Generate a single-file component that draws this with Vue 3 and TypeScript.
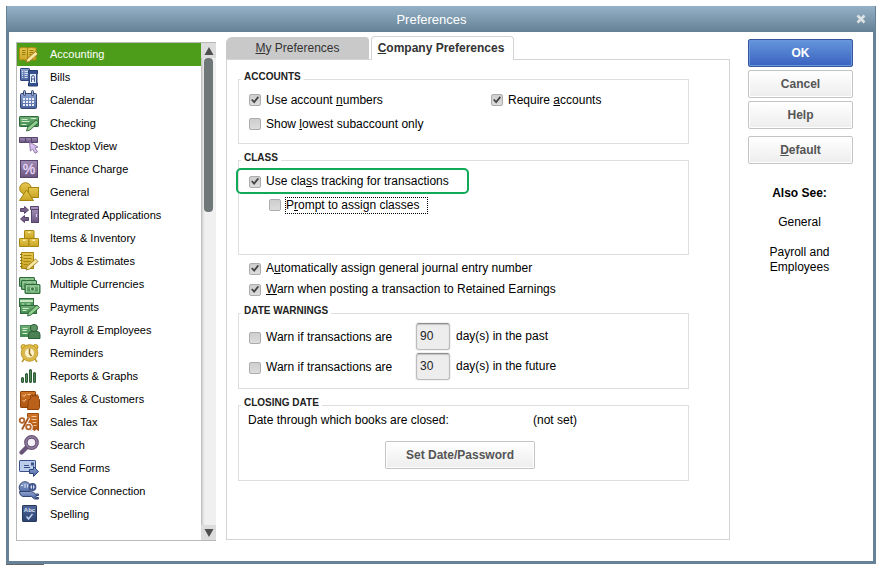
<script setup lang="ts">
import { ref } from 'vue'

interface Category {
  name: string
  art: string
}

const pencil = (x: number, y: number, fill: string, edge: string) =>
  `<path d="M${x} ${y}l1-3.500 8.500-7.500 2.500 2.500-8.500 7.500z" fill="${fill}" stroke="${edge}" stroke-width=".8"/>`

const bill = (x: number, y: number) =>
  `<rect x="${x}" y="${y}" width="15" height="9" rx=".6" fill="url(#g-green)" stroke="#2f6b3c"/><rect x="${x + 1.5}" y="${y + 1.5}" width="12" height="6" fill="none" stroke="#b9e0b4" stroke-width=".8"/><circle cx="${x + 7.5}" cy="${y + 4.5}" r="2.200" fill="#3f7d49" stroke="#c8e8c4" stroke-width=".8"/>`

const box = (x: number, y: number) =>
  `<rect x="${x}" y="${y}" width="9.500" height="8" rx=".5" fill="url(#g-gold)" stroke="#a5840f"/><path d="M${x + 3.5} ${y + 1}h2.500v1.500h-2.500z" fill="#fbeeb0"/>`

const categories: Category[] = [
  {
    name: 'Accounting',
    art: `<path d="M1.500 4q4.500-1 8 0 3.500-1 8.500 0v12q-5-1-8.500.8-3.500-1.800-8-.8z" fill="url(#g-gold)" stroke="#b08b12"/><path d="M9.500 4.500v11.500" stroke="#a5840f"/><path d="M4 6.500h3.500M4 8.500h3.500M4 10.500h3.500M11.500 6.500h4M11.500 8.500h4M11.500 10.500h2" stroke="#9a7a10"/>${pencil(8, 18.5, '#f8e6a0', '#8f7010')}`,
  },
  {
    name: 'Bills',
    art: `<rect x="2.500" y="1.500" width="9" height="12" rx=".6" fill="url(#g-blue)" stroke="#2c4480"/><path d="M4 4.500h1M6.500 4.500h4M4 6.500h1M6.500 6.500h4M4 8.500h1M6.500 8.500h3M4 10.500h1M6.500 10.500h3" stroke="#d5e0f5"/><path d="M10.500 3.500h9v3h-.5v9.500h.5v3h-9v-3h.5v-9.500h-.5z" fill="#35508f" stroke="#243a70"/><rect x="12" y="7" width="6" height="9" fill="#e4ecfa"/><path d="M13.500 15v-4.500q0-2 1.500-2t1.500 2v4.500M13.500 12h3" fill="none" stroke="#41588f"/>`,
  },
  {
    name: 'Calendar',
    art: `<rect x="2.500" y="3.500" width="16" height="15" rx="1" fill="url(#g-blue)" stroke="#34456f"/><rect x="5.500" y=".5" width="2" height="5" rx="1" fill="#a5b3d4" stroke="#34456f"/><rect x="13.500" y=".5" width="2" height="5" rx="1" fill="#a5b3d4" stroke="#34456f"/><path d="M5 9h11.500M5 12h11.500M5 15h11.500" stroke="#e9eefa" stroke-width="2" stroke-dasharray="2 1"/>`,
  },
  {
    name: 'Checking',
    art: `<rect x="1.500" y="3.500" width="19" height="10" rx=".6" fill="url(#g-green)" stroke="#2f6b3c"/><path d="M3.500 6.500h6M3.500 8.500h8M3.500 11.500h5M13 5.500h5" stroke="#cdeccb"/>${pencil(8.5, 18, '#8fce8c', '#25552f')}`,
  },
  {
    name: 'Desktop View',
    art: `<path d="M1.500 1.500h6v5h-6zM7.500 1.500h6v5h-6zM13.500 1.500h6v5h-6z" fill="url(#g-purple)" stroke="#57446a"/><path d="M11.500 6l8.500 5-3 .8 2.500 4.200-2.500 1.200-2.300-4.200-2.300 2z" fill="#d8c2ee" stroke="#7d6497" stroke-width=".8"/>`,
  },
  {
    name: 'Finance Charge',
    art: `<rect x="2.500" y="1.500" width="17" height="17" fill="url(#g-purple)" stroke="#57446a"/><text x="11" y="15" text-anchor="middle" font-size="14" fill="#ead9fa" stroke="#ead9fa" stroke-width=".3">%</text>`,
  },
  {
    name: 'General',
    art: `<circle cx="7.500" cy="6.500" r="5.800" fill="url(#g-gold)" stroke="#a5840f"/><rect x="10.500" y="5.500" width="10" height="10" fill="url(#g-gold)" stroke="#a5840f"/><path d="M8.500 8l7 10.500h-14z" fill="url(#g-gold)" stroke="#a5840f"/>`,
  },
  {
    name: 'Integrated Applications',
    art: `<path d="M2.500 3.500h4v-2l4 3.500-4 3.500v-2h-4zM10.500 12.500h-4v-2l-4 3.500 4 3.500v-2h4z" fill="#735f86" stroke="#57446a"/><path d="M12.500 1.500h8v3h-8z" fill="#a794bb" stroke="#57446a"/><rect x="13.500" y="4.500" width="7" height="13" fill="url(#g-purple)" stroke="#57446a"/><path d="M18.500 9v3" stroke="#e2cff5"/>`,
  },
  { name: 'Items & Inventory', art: box(6.5, 2.5) + box(1.5, 10.5) + box(11, 10.5) },
  {
    name: 'Jobs & Estimates',
    art: `<path d="M3.500 1.500h12v16h-12z" fill="url(#g-gold)" stroke="#a5840f"/><path d="M5.500 4.500h8M5.500 7.500h8M5.500 10.500h7M5.500 13.500h4" stroke="#a5840f"/><path d="M2 3.500h2.500M2 6.500h2.500M2 9.500h2.500M2 12.500h2.500M2 15.500h2.500" stroke="#8f7010"/>${pencil(8, 19, '#f8e6a0', '#8f7010')}`,
  },
  { name: 'Multiple Currencies', art: bill(1.5, 3.5) + bill(3.5, 6.5) + bill(7, 10.5) },
  {
    name: 'Payments',
    art: `<rect x="1.500" y="1.500" width="14" height="8" fill="url(#g-green)" stroke="#2f6b3c"/><path d="M2 4h13" stroke="#c5e8c2" stroke-width="2"/><path d="M3.500 7h3M8.500 7h4" stroke="#c5e8c2"/><rect x="2.500" y="8.500" width="16" height="8" fill="url(#g-green)" stroke="#2f6b3c"/><path d="M4.500 11.500h6M4.500 13.500h4" stroke="#d4f0d1"/>${pencil(9.5, 19, '#8fce8c', '#25552f')}`,
  },
  {
    name: 'Payroll & Employees',
    art: `<rect x="2.500" y="5.500" width="16" height="11" fill="url(#g-green)" stroke="#4a8c57"/><path d="M4.500 8.500h5M4.500 10.500h4M4.500 13.500h5" stroke="#d4f0d1"/><circle cx="16" cy="8" r="3.600" fill="#5e9263" stroke="#2d5f37"/><path d="M10.500 18.500v-4q0-3 3-3h5.500q3 0 3 3v4z" fill="#4c8253" stroke="#2d5f37"/>`,
  },
  {
    name: 'Reminders',
    art: `<circle cx="5.500" cy="4" r="2.500" fill="#e6c34a" stroke="#b8942a"/><circle cx="17.500" cy="4" r="2.500" fill="#e6c34a" stroke="#b8942a"/><path d="M6 16l-2 3M17 16l2 3" stroke="#b8942a" stroke-width="1.500"/><circle cx="11.500" cy="10" r="6.800" fill="#fff3cc" stroke="#dcb846" stroke-width="3.200"/><circle cx="11.500" cy="10" r="8.300" fill="none" stroke="#b8942a" stroke-width=".8"/><circle cx="11.500" cy="10" r="5" fill="none" stroke="#b8942a" stroke-width=".6"/><path d="M11.500 5.500v5l2 2.500" fill="none" stroke="#94731a" stroke-width="1.500"/>`,
  },
  {
    name: 'Reports & Graphs',
    art: `<path d="M4.500 12.500v3M8.500 8.500v7M12.500 4.500v11M16.500 7.500v8" stroke="#2c5a35" stroke-width="3" stroke-linecap="round"/><path d="M4.500 12.500v3M8.500 8.500v7M12.500 4.500v11M16.500 7.500v8" stroke="#4f8a58" stroke-width="1"/>`,
  },
  {
    name: 'Sales & Customers',
    art: `<rect x="2.500" y="2.500" width="15" height="16" rx=".6" fill="url(#g-orange)" stroke="#8d420c"/><path d="M4.500 6l1.500 1.500 2-2.500M4.500 11l1.500 1.500 2-2.500M9.500 5.500h3" fill="none" stroke="#f7c79a"/><path d="M10.500 11l2-1v-3l1.500-1.500 1 2 1.500-2 1 2 1.500-2 1.500 2v2l1 1v8l-1 2h-11z" fill="#b9601a" stroke="#8d420c"/>`,
  },
  {
    name: 'Sales Tax',
    art: `<path d="M9.500 1.500h11v17l-2-1.500-2 1.500-2-1.500-2 1.500-3-1.500z" fill="url(#g-orange)" stroke="#9b4c12"/><path d="M13.500 4.500h5M13.500 7.500h5M14.500 10.500h4M15.500 13.500h3" stroke="#f7c79a"/><path d="M10.500 5.500l-6.500 12" stroke="#fff" stroke-width="4"/><circle cx="4" cy="8.500" r="2.300" fill="#fff" stroke="#b4662c" stroke-width="1.800"/><circle cx="10.500" cy="15" r="2.300" fill="#fff" stroke="#fff" stroke-width="4"/><circle cx="10.500" cy="15" r="2.300" fill="#fff" stroke="#b4662c" stroke-width="1.800"/><path d="M10.500 5.500l-6.500 12" stroke="#a4541b" stroke-width="1.800"/>`,
  },
  {
    name: 'Search',
    art: `<path d="M8.500 12.500l-5 5" stroke="#6a567a" stroke-width="4.400" stroke-linecap="round"/><circle cx="13.500" cy="7.500" r="5.600" fill="#f4f0f8" stroke="#64506f" stroke-width="3.600"/><circle cx="13.500" cy="7.500" r="5.600" fill="none" stroke="#8f7b9f" stroke-width="1.600"/>`,
  },
  {
    name: 'Send Forms',
    art: `<rect x="1.500" y="2.500" width="16" height="11" rx=".6" fill="#bccdec" stroke="#3a5088"/><path d="M13 4.500h3v3h-3z" fill="#3a5088"/><path d="M6 7.500h5M6 9.500h6" stroke="#3a5088"/><path d="M11.500 11.500h4v-3l5 5-5 5v-3h-4z" fill="url(#g-blue)" stroke="#2c4480"/>`,
  },
  {
    name: 'Service Connection',
    art: `<circle cx="7" cy="6.500" r="5.800" fill="url(#g-blue)" stroke="#34456f"/><path d="M3 4.500h2M7 3v4M9.500 3.500v3" stroke="#dbe4f7"/><circle cx="14.500" cy="6" r="3" fill="#d3ddf2" stroke="#40548c" stroke-width="1.800"/><path d="M14.500 2v8" stroke="#40548c"/><path d="M1.500 10.500h11q3 0 5 2.500h3v1.500h-2.500v2h2.500v1.500h-4l-3-2.500h-9q-3-1-3-5z" fill="url(#g-blue)" stroke="#34456f"/>`,
  },
  {
    name: 'Spelling',
    art: `<rect x="4.500" y="1.500" width="14" height="16" rx=".6" fill="url(#g-navy)" stroke="#26375c"/><text x="11.500" y="7.500" text-anchor="middle" font-size="6" font-weight="bold" fill="#dfe8f8">Abc</text><path d="M8.500 12.500l2 2.500 4-5" fill="none" stroke="#c3d2f0" stroke-width="1.500"/>`,
  },
]

const gradients = [
  { id: 'g-gold', from: '#e6c850', to: '#c9a423' },
  { id: 'g-blue', from: '#8fa5d2', to: '#4a639f' },
  { id: 'g-green', from: '#74b079', to: '#3f8a4d' },
  { id: 'g-purple', from: '#a08cb4', to: '#6b5680' },
  { id: 'g-orange', from: '#d07527', to: '#ad540f' },
  { id: 'g-navy', from: '#4f669a', to: '#2d4270' },
]

const selected = ref('Accounting')
const useNumbers = ref(true)
const requireAccounts = ref(true)
const lowestOnly = ref(false)
const classTracking = ref(true)
const promptClasses = ref(false)
const autoAssign = ref(true)
const warnRetained = ref(true)
const warnings = ref([
  { id: 'past', on: false, days: '90', suffix: 'day(s) in the past' },
  { id: 'future', on: false, days: '30', suffix: 'day(s) in the future' },
])
</script>

<template>
  <svg class="defs" width="0" height="0" aria-hidden="true">
    <defs>
      <linearGradient v-for="g in gradients" :id="g.id" :key="g.id" x1="0" y1="0" x2="0" y2="1">
        <stop offset="0" :stop-color="g.from" />
        <stop offset="1" :stop-color="g.to" />
      </linearGradient>
    </defs>
  </svg>

  <main class="dialog">
    <header class="titlebar">
      <h1>Preferences</h1>
      <button class="close" type="button" aria-label="Close">
        <svg width="10" height="10" viewBox="0 0 10 10">
          <path d="M1.500 1.500l7 7M8.500 1.500l-7 7" stroke="#dfe3e6" stroke-width="2.600" />
        </svg>
      </button>
    </header>

    <div class="body">
      <nav class="sidebar">
        <ul>
          <li v-for="c in categories" :key="c.name">
            <button
              type="button"
              class="category"
              :class="{ selected: c.name === selected }"
              @click="selected = c.name"
            >
              <svg class="icon" width="23" height="22" viewBox="0 0 23 22" fill="none" v-html="c.art"></svg>
              <span>{{ c.name }}</span>
            </button>
          </li>
        </ul>
        <div class="scrollbar">
          <button type="button" class="arrow" aria-label="Scroll up">
            <svg width="10" height="8" viewBox="0 0 10 8"><path d="M5 0l4.500 8h-9z" fill="#4d4f50" /></svg>
          </button>
          <div class="track"><div class="thumb"></div></div>
          <button type="button" class="arrow" aria-label="Scroll down">
            <svg width="10" height="8" viewBox="0 0 10 8"><path d="M5 8l4.500-8h-9z" fill="#4d4f50" /></svg>
          </button>
        </div>
      </nav>

      <section class="content">
        <div class="tabs" role="tablist">
          <button type="button" role="tab" class="tab"><span><u>M</u>y Preferences</span></button>
          <button type="button" role="tab" class="tab active" aria-selected="true">
            <span><u>C</u>ompany Preferences</span>
          </button>
        </div>

        <div class="panel">
          <fieldset class="accounts">
            <legend>ACCOUNTS</legend>
            <label class="check"><input v-model="useNumbers" type="checkbox" /><span>Use account <u>n</u>umbers</span></label>
            <label class="check"><input v-model="requireAccounts" type="checkbox" /><span>Require <u>a</u>ccounts</span></label>
            <label class="check"><input v-model="lowestOnly" type="checkbox" /><span>Show <u>l</u>owest subaccount only</span></label>
          </fieldset>

          <fieldset class="class-group">
            <legend>CLASS</legend>
            <label class="check highlight"><input v-model="classTracking" type="checkbox" /><span>Use cla<u>s</u>s tracking for transactions</span></label>
            <label class="check nested"><input v-model="promptClasses" type="checkbox" /><span class="focus">P<u>r</u>ompt to assign classes</span></label>
          </fieldset>

          <div class="loose">
            <label class="check"><input v-model="autoAssign" type="checkbox" /><span>A<u>u</u>tomatically assign general journal entry number</span></label>
            <label class="check"><input v-model="warnRetained" type="checkbox" /><span><u>W</u>arn when posting a transaction to Retained Earnings</span></label>
          </div>

          <fieldset class="dates">
            <legend>DATE WARNINGS</legend>
            <div v-for="w in warnings" :key="w.id" class="warning">
              <label class="check"><input v-model="w.on" type="checkbox" /><span>Warn if transactions are</span></label>
              <input :id="w.id" v-model="w.days" class="days" type="text" />
              <label :for="w.id">{{ w.suffix }}</label>
            </div>
          </fieldset>

          <fieldset class="closing">
            <legend>CLOSING DATE</legend>
            <p><span>Date through which books are closed:</span><span>(not set)</span></p>
            <button type="button" class="btn">Set Date/Password</button>
          </fieldset>
        </div>
      </section>

      <aside class="actions">
        <button type="button" class="btn primary">OK</button>
        <button type="button" class="btn">Cancel</button>
        <button type="button" class="btn">Help</button>
        <button type="button" class="btn default"><span><u>D</u>efault</span></button>
        <h2>Also See:</h2>
        <a href="#general">General</a>
        <a href="#payroll">Payroll and<br />Employees</a>
      </aside>
    </div>
  </main>
  <div class="stub"></div>
</template>

<style>
body {
  margin: 0;
  background: #fff;
}
</style>

<style scoped>
* {
  box-sizing: border-box;
}
.defs {
  display: block;
}
.dialog {
  margin: 6px 7px 0 6px;
  border: 3px solid #668299;
  border-top: 0;
  background: #fff;
  color: #000;
  font: 12px/15px 'Liberation Sans', Arial, sans-serif;
}
button,
input {
  font: inherit;
  margin: 0;
}
.titlebar {
  display: flex;
  align-items: center;
  height: 26px;
  margin: 0 -2px;
  padding: 0 7px 0 2px;
  background: linear-gradient(#94b1c7, #658194);
}
h1 {
  flex: 1;
  margin: 0;
  color: #fff;
  font-size: 13px;
  font-weight: normal;
  text-align: center;
}
.close {
  display: flex;
  padding: 2px;
  border: 0;
  background: none;
}
.body {
  display: flex;
  padding: 4px 20px 20px 7px;
}
.sidebar {
  display: flex;
  flex: 0 0 200px;
  margin-top: 6px;
  border: 1px solid #b8b8b8;
  border-right: 0;
}
ul {
  flex: 1;
  margin: 0;
  padding: 0 0 14px;
  list-style: none;
}
.category {
  display: flex;
  align-items: center;
  gap: 9px;
  width: 100%;
  height: 23px;
  padding: 0 0 0 1px;
  border: 0;
  background: none;
  color: #000;
  font-size: 11px;
  text-align: left;
}
.category.selected {
  background: #4e9d1a;
  color: #fff;
}
.icon {
  font-family: 'Liberation Sans', Arial, sans-serif;
}
.scrollbar {
  display: flex;
  flex-direction: column;
  width: 15px;
  background: #f0f0f0;
}
.arrow {
  display: flex;
  align-items: center;
  justify-content: center;
  height: 15px;
  padding: 0;
  border: 0;
  background: #dcdcdc;
}
.track {
  flex: 1;
  padding: 0 3px;
  background: linear-gradient(90deg, #b8b8b8, #e0e0e0 2px, #f0f0f0 4px);
}
.thumb {
  height: 33%;
  border-radius: 4px;
  background: #6f7778;
}
.content {
  display: flex;
  flex: 1;
  flex-direction: column;
  margin: 0 0 1px 10px;
}
.tabs {
  display: flex;
  align-items: flex-end;
  gap: 2px;
}
.tab {
  width: 143px;
  height: 22px;
  padding: 0;
  border: 0;
  border-radius: 6px 4px 0 0;
  background: #c9c9c9;
  color: #333;
  text-align: center;
}
.tab.active {
  position: relative;
  height: 24px;
  margin-bottom: -1px;
  padding-right: 3px;
  border: 1px solid #d4d4d4;
  border-bottom: 0;
  border-radius: 4px 4px 0 0;
  background: #fff;
  font-weight: bold;
}
.panel {
  flex: 1;
  padding: 12px 40px 0 11px;
  border: 1px solid #d4d4d4;
}
fieldset {
  min-width: 0;
  margin: 0 0 9px;
  padding: 0 10px;
  border: 1px solid #dedede;
}
legend {
  margin-left: -8px;
  padding: 0 3px 5px;
  color: #222;
  font-size: 10px;
  font-weight: bold;
  line-height: 10px;
}
.check {
  display: flex;
  align-items: center;
  gap: 5px;
}
.check input {
  display: grid;
  flex: none;
  place-items: center;
  width: 12px;
  height: 12px;
  appearance: none;
  border: 1px solid #acacac;
  border-radius: 2px;
  background: linear-gradient(#cecece, #dcdcdc);
}
.check input:checked::before {
  width: 8px;
  height: 8px;
  background: #444;
  clip-path: polygon(0 50%, 18% 36%, 38% 60%, 84% 4%, 100% 18%, 40% 94%);
  content: '';
}
.accounts {
  display: grid;
  grid-template-columns: 242px 1fr;
  grid-auto-rows: 24px;
  padding-top: 1px;
  padding-bottom: 7px;
}
.class-group {
  margin-bottom: 3px;
  padding-bottom: 40px;
}
.highlight {
  width: max-content;
  height: 26px;
  margin-left: -13px;
  padding: 1px 18px 0 11px;
  border: 2px solid #0fa958;
  border-radius: 5px;
}
.nested {
  height: 18px;
  margin: 2px 0 0 20px;
}
.focus {
  padding-right: 8px;
  outline: 1px dotted #000;
}
.loose {
  margin-bottom: 6px;
  padding-left: 11px;
}
.loose .check {
  height: 21px;
}
.dates {
  display: grid;
  gap: 3px;
  padding-top: 2px;
  padding-bottom: 8px;
}
.warning {
  display: flex;
  align-items: center;
  gap: 6px;
}
.warning .check {
  width: 161px;
  padding-top: 2px;
}
.days {
  width: 34px;
  height: 27px;
  padding: 0 3px 2px;
  border: 1px solid #bcbcbc;
  border-top-color: #8e8e8e;
  border-radius: 3px;
  background: #ededed;
  box-shadow: inset 0 1px 1px #c4c4c4, 0 0 0 1px #f2f2f2;
  color: #222;
}
.closing {
  margin-bottom: 0;
  padding-bottom: 11px;
}
.closing p {
  display: flex;
  margin: 0 0 13px -1px;
}
.closing p span:first-child {
  width: 285px;
}
.btn {
  display: block;
  height: 28px;
  padding: 0;
  border: 1px solid #c4c4c4;
  border-radius: 2px;
  background: linear-gradient(#fff, #ededed);
  box-shadow: inset 0 0 0 1px #fff;
  color: #555;
  font-weight: bold;
}
.closing .btn {
  width: 150px;
  margin-left: 136px;
}
.actions {
  display: flex;
  flex: 0 0 105px;
  flex-direction: column;
  gap: 3px;
  margin: 3px 0 0 18px;
  text-align: center;
}
.btn.primary {
  border-color: #35559d;
  background: linear-gradient(#6596dc, #3a62c0);
  box-shadow: inset 0 0 0 1px #6c96dc;
  color: #fff;
}
.btn.default {
  margin-top: 4px;
}
h2 {
  margin: 19px 0 11px;
  padding-right: 2px;
  font-size: 12px;
  line-height: 15px;
}
.actions a {
  margin-bottom: 12px;
  padding-right: 2px;
  color: #000;
  text-decoration: none;
}
.stub {
  width: 38px;
  height: 1px;
  margin-left: 6px;
  background: #666;
}
</style>
